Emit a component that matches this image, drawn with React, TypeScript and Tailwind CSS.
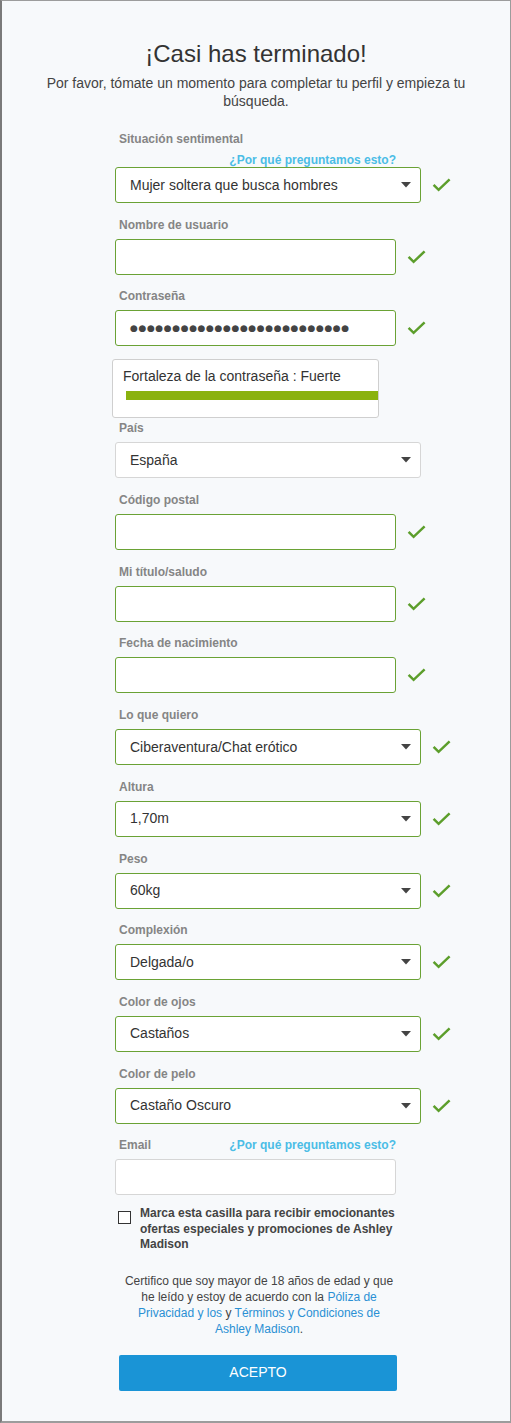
import type { ReactNode } from 'react';

const FONT = { fontFamily: '"Liberation Sans", Arial, sans-serif' };

type Field = {
  label: string;
  kind: 'select' | 'input' | 'password';
  value?: string;
  valid?: boolean;
  link?: 'below' | 'inline';
};

const fields: Field[] = [
  { label: 'Situación sentimental', kind: 'select', value: 'Mujer soltera que busca hombres', valid: true, link: 'below' },
  { label: 'Nombre de usuario', kind: 'input', valid: true },
  { label: 'Contraseña', kind: 'password', valid: true },
  { label: 'País', kind: 'select', value: 'España' },
  { label: 'Código postal', kind: 'input', valid: true },
  { label: 'Mi título/saludo', kind: 'input', valid: true },
  { label: 'Fecha de nacimiento', kind: 'input', valid: true },
  { label: 'Lo que quiero', kind: 'select', value: 'Ciberaventura/Chat erótico', valid: true },
  { label: 'Altura', kind: 'select', value: '1,70m', valid: true },
  { label: 'Peso', kind: 'select', value: '60kg', valid: true },
  { label: 'Complexión', kind: 'select', value: 'Delgada/o', valid: true },
  { label: 'Color de ojos', kind: 'select', value: 'Castaños', valid: true },
  { label: 'Color de pelo', kind: 'select', value: 'Castaño Oscuro', valid: true },
  { label: 'Email', kind: 'input', link: 'inline' },
];

function Check() {
  return (
    <svg width="19" height="14" viewBox="0 0 19 14" className="shrink-0">
      <path d="M1.6 6.8 L6.6 11.8 L17.6 1.4" fill="none" stroke="#5c9e2b" strokeWidth="2.5" />
    </svg>
  );
}

function Caret() {
  return (
    <svg width="10" height="6" viewBox="0 0 10 6" className="shrink-0">
      <path d="M0 0 H10 L5 5.5 Z" fill="#444" />
    </svg>
  );
}

function WhyLink() {
  return <span className="text-[12px] font-bold leading-[14px] text-[#4bbde6]">¿Por qué preguntamos esto?</span>;
}

function Box({ field, children }: { field: Field; children?: ReactNode }) {
  const width = field.kind === 'select' ? 'w-[306px]' : 'w-[281px]';
  const border = field.valid ? 'border-[#6aa235]' : 'border-[#d6d6d6]';
  return (
    <div className={`flex h-[36px] ${width} items-center rounded-[3px] border ${border} bg-white pl-[14px] pr-[9px]`}>
      {children}
    </div>
  );
}

function FieldRow({ field }: { field: Field }) {
  return (
    <div className="mb-[14.7px]">
      {field.link === 'inline' ? (
        <div className="mb-[7px] flex w-[281px] items-center justify-between pl-[4px]">
          <span className="text-[12px] font-bold leading-[14px] text-[#858585]">{field.label}</span>
          <WhyLink />
        </div>
      ) : (
        <div className="mb-[7px] pl-[4px] text-[12px] font-bold leading-[14px] text-[#858585]">{field.label}</div>
      )}
      {field.link === 'below' && (
        <div className="flex w-[281px] justify-end">
          <WhyLink />
        </div>
      )}
      <div className="flex items-center gap-[11px]">
        <Box field={field}>
          {field.kind === 'select' && (
            <>
              <span className="flex-1 text-[14px] text-[#333]">{field.value}</span>
              <Caret />
            </>
          )}
          {field.kind === 'password' && (
            <span
              className="text-[9px] tracking-[0.6px] text-[#444]"
              style={{ fontFamily: '"DejaVu Sans", sans-serif' }}
            >
              {'●'.repeat(26)}
            </span>
          )}
        </Box>
        {field.valid && <Check />}
      </div>
      {field.kind === 'password' && (
        <div className="-ml-[3px] mt-[13px] -mb-[11.7px] h-[59px] w-[267px] rounded-[3px] border border-[#cfcfcf] bg-white pl-[10px] pt-[7px]">
          <div className="text-[14px] leading-[18px] text-[#333]">Fortaleza de la contraseña : Fuerte</div>
          <div className="ml-[3px] mt-[6px] h-[9px] w-[252px] bg-[#8ab20f]" />
        </div>
      )}
    </div>
  );
}

export default function App() {
  return (
    <div
      className="h-[1423px] w-[511px] border border-b-2 border-l-2 border-[#9c9c9c] border-l-[#7a7a7a] bg-[#f7f9fb]"
      style={FONT}
    >
      <h1 className="pt-[39px] text-center text-[24px] leading-[28px] text-[#333]">¡Casi has terminado!</h1>
      <p className="mt-[6px] px-[40px] text-center text-[14px] leading-[18px] text-[#444]">
        Por favor, tómate un momento para completar tu perfil y empieza tu búsqueda.
      </p>

      <div className="mt-[22px] pl-[113px]">
        {fields.map((f) => (
          <FieldRow key={f.label} field={f} />
        ))}

        <div className="-mt-[3.7px] flex items-start gap-[9px] pl-[3px]">
          <span className="mt-[5px] h-[13px] w-[13px] shrink-0 border border-[#333] bg-white" />
          <span className="w-[262px] text-[12px] font-bold leading-[15.5px] text-[#444]">
            Marca esta casilla para recibir emocionantes ofertas especiales y promociones de Ashley Madison
          </span>
        </div>

        <p className="ml-[4px] mt-[20px] w-[280px] text-center text-[12px] leading-[16px] text-[#444]">
          Certifico que soy mayor de 18 años de edad y que
          <br />
          he leído y estoy de acuerdo con la <span className="text-[#2a90d4]">Póliza de</span>
          <br />
          <span className="text-[#2a90d4]">Privacidad y los</span> y{' '}
          <span className="text-[#2a90d4]">Términos y Condiciones de</span>
          <br />
          <span className="text-[#2a90d4]">Ashley Madison</span>.
        </p>

        <button className="ml-[4px] mt-[18px] flex h-[36px] w-[278px] items-center justify-center rounded-[2px] bg-[#1a94d6] text-[14px] text-white">
          ACEPTO
        </button>
      </div>
    </div>
  );
}
